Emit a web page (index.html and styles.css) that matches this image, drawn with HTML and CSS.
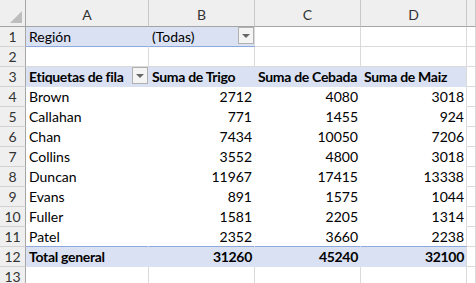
FILE: index.html
```html
<!DOCTYPE html>
<html lang="es">
<head>
    <meta charset="UTF-8">
    <title>Tabla dinámica</title>
    <link rel="stylesheet" href="styles.css">
</head>
<body>
    <div class="sheet">
        <!-- column headers -->
        <div class="corner">
            <svg width="26" height="26" viewBox="0 0 26 26"><polygon points="22,11 22,23 10,23" fill="#bdbdbd"/></svg>
        </div>
        <div class="colhead">A</div>
        <div class="colhead">B</div>
        <div class="colhead">C</div>
        <div class="colhead">D</div>
        <div class="colhead"></div>

        <!-- row 1: report filter -->
        <div class="rowhead">1</div>
        <div class="cell band filter-line joined">Región</div>
        <div class="cell band filter-line has-btn">(Todas)<span class="dd"></span></div>
        <div class="cell"></div>
        <div class="cell"></div>
        <div class="cell"></div>

        <!-- row 2 -->
        <div class="rowhead">2</div>
        <div class="cell"></div>
        <div class="cell"></div>
        <div class="cell"></div>
        <div class="cell"></div>
        <div class="cell"></div>

        <!-- row 3: pivot header -->
        <div class="rowhead">3</div>
        <div class="cell band bold joined has-btn">Etiquetas de fila<span class="dd"></span></div>
        <div class="cell band bold joined">Suma de Trigo</div>
        <div class="cell band bold joined">Suma de Cebada</div>
        <div class="cell band bold edge">Suma de Maiz</div>
        <div class="cell"></div>

        <div class="rowhead">4</div>
        <div class="cell pv">Brown</div>
        <div class="cell pv num">2712</div>
        <div class="cell pv num">4080</div>
        <div class="cell pv num edge">3018</div>
        <div class="cell"></div>

        <div class="rowhead">5</div>
        <div class="cell pv">Callahan</div>
        <div class="cell pv num">771</div>
        <div class="cell pv num">1455</div>
        <div class="cell pv num edge">924</div>
        <div class="cell"></div>

        <div class="rowhead">6</div>
        <div class="cell pv">Chan</div>
        <div class="cell pv num">7434</div>
        <div class="cell pv num">10050</div>
        <div class="cell pv num edge">7206</div>
        <div class="cell"></div>

        <div class="rowhead">7</div>
        <div class="cell pv">Collins</div>
        <div class="cell pv num">3552</div>
        <div class="cell pv num">4800</div>
        <div class="cell pv num edge">3018</div>
        <div class="cell"></div>

        <div class="rowhead">8</div>
        <div class="cell pv">Duncan</div>
        <div class="cell pv num">11967</div>
        <div class="cell pv num">17415</div>
        <div class="cell pv num edge">13338</div>
        <div class="cell"></div>

        <div class="rowhead">9</div>
        <div class="cell pv">Evans</div>
        <div class="cell pv num">891</div>
        <div class="cell pv num">1575</div>
        <div class="cell pv num edge">1044</div>
        <div class="cell"></div>

        <div class="rowhead">10</div>
        <div class="cell pv">Fuller</div>
        <div class="cell pv num">1581</div>
        <div class="cell pv num">2205</div>
        <div class="cell pv num edge">1314</div>
        <div class="cell"></div>

        <div class="rowhead">11</div>
        <div class="cell pv total-line">Patel</div>
        <div class="cell pv num total-line">2352</div>
        <div class="cell pv num total-line">3660</div>
        <div class="cell pv num total-line edge">2238</div>
        <div class="cell"></div>

        <!-- row 12: grand total -->
        <div class="rowhead">12</div>
        <div class="cell band bold joined">Total general</div>
        <div class="cell band bold num joined">31260</div>
        <div class="cell band bold num joined">45240</div>
        <div class="cell band bold num edge">32100</div>
        <div class="cell"></div>

        <div class="rowhead">13</div>
        <div class="cell"></div>
        <div class="cell"></div>
        <div class="cell"></div>
        <div class="cell"></div>
        <div class="cell"></div>
    </div>
</body>
</html>
```

FILE: styles.css
```css
:root {
    --grid: #dadada;
    --head-bg: #efefef;
    --head-line: #a5a5a5;
    --band: #d9e1f2;
    --band-line: #8ea9db;
}

* {
    margin: 0;
    padding: 0;
    box-sizing: border-box;
}

body {
    background: #fff;
    font-family: Lato, "Open Sans", sans-serif;
    font-size: 14px;
    color: #000;
    overflow: hidden;
}

.sheet {
    display: grid;
    grid-template-columns: 26px 123px 106px 106px 106px 1fr;
    grid-template-rows: 27px repeat(13, 20px);
    width: 476px;
}

.corner {
    background: var(--head-bg);
    border-right: 1px solid var(--head-line);
    border-bottom: 1px solid var(--head-line);
}

.corner svg {
    display: block;
}

.colhead {
    background: var(--head-bg);
    border-right: 1px solid #c8c8c8;
    border-bottom: 1px solid var(--head-line);
    text-align: center;
    line-height: 19px;
    padding-top: 5px;
    color: #333;
}

.rowhead {
    background: var(--head-bg);
    border-right: 1px solid var(--head-line);
    border-bottom: 1px solid #d2d2d2;
    text-align: center;
    line-height: 19px;
    color: #333;
}

.cell {
    border-right: 1px solid var(--grid);
    border-bottom: 1px solid var(--grid);
    padding: 0 3px;
    line-height: 19px;
    white-space: nowrap;
    overflow: hidden;
}

.pv {
    background: #fff;
    border-color: #fff;
}

.band {
    background: var(--band);
    border-color: var(--band);
}

.edge {
    border-right-color: var(--grid);
}

.filter-line {
    border-bottom-color: var(--band-line);
}

.filter-line:not(.joined) {
    border-right-color: var(--grid);
}

.total-line {
    border-bottom-color: var(--band-line);
}

.bold {
    font-weight: bold;
    letter-spacing: -0.3px;
}

.num {
    text-align: right;
    padding-right: 2px;
}

.has-btn {
    display: flex;
    align-items: flex-start;
    padding-right: 0;
}

.dd {
    margin-left: auto;
    flex-shrink: 0;
    width: 16px;
    height: 17px;
    background: #f4f4f4;
    border: 1px solid #b0b0b0;
    display: flex;
    align-items: center;
    justify-content: center;
}

.dd::after {
    content: "";
    border-left: 4px solid transparent;
    border-right: 4px solid transparent;
    border-top: 4px solid #666;
}
```
